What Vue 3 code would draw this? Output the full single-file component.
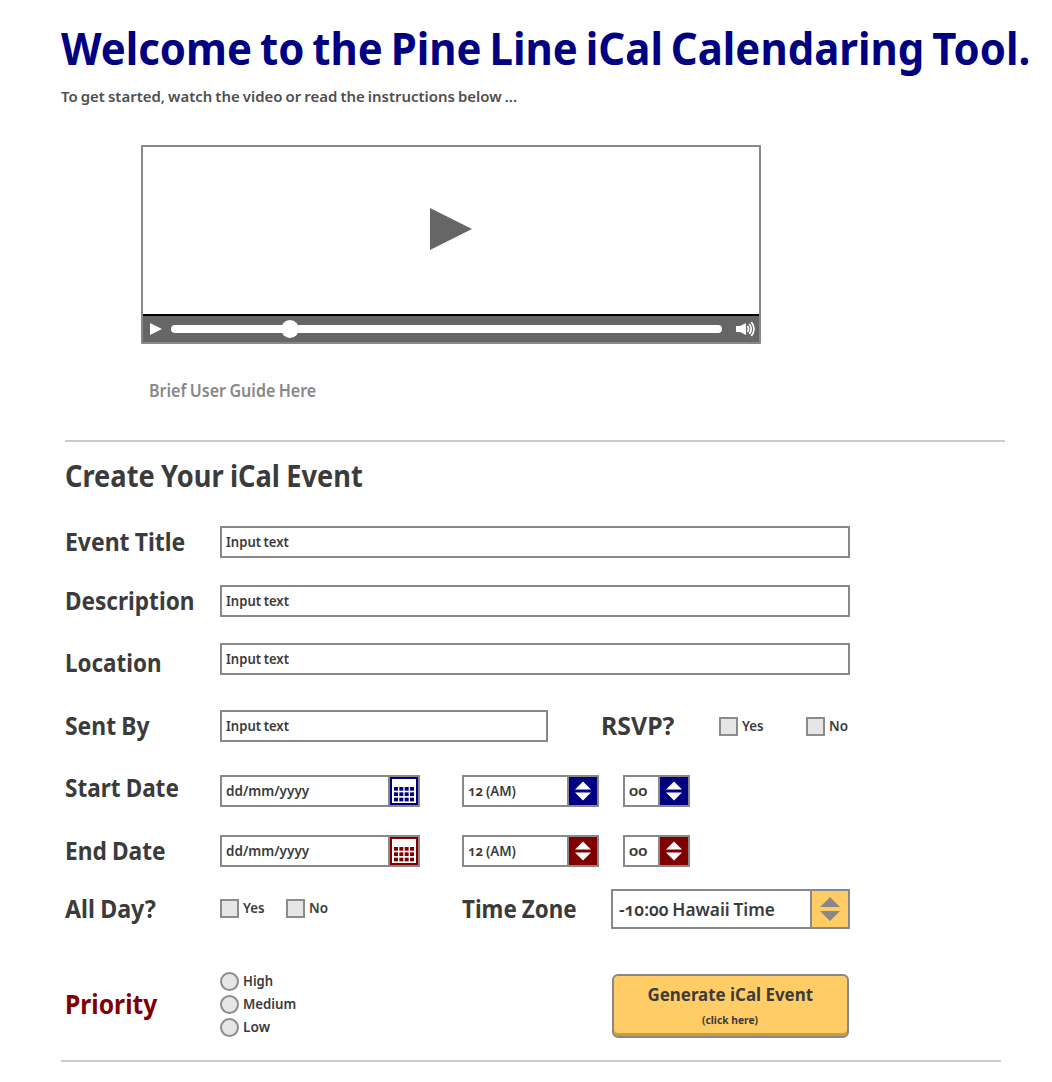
<script setup>
import { ref } from 'vue'

// Condenses a line of text so that it takes exactly the given width.
const vFit = {
  mounted(el, { value }) {
    el.style.transform = `scaleX(${value / el.offsetWidth})`
  },
}

const textRows = [
  { key: 'title', label: 'Event Title', width: 120 },
  { key: 'description', label: 'Description', width: 129 },
  { key: 'location', label: 'Location', width: 97 },
]
const dateRows = [
  { key: 'start', label: 'Start Date', width: 114 },
  { key: 'end', label: 'End Date', width: 101 },
]
const priorities = [
  { label: 'High', width: 30 },
  { label: 'Medium', width: 53 },
  { label: 'Low', width: 27.5 },
]
const dotColumns = [2, 7.33, 12.67, 18]
const dotRows = [8, 13.33, 18.67]
const progress = ref(21.6)
</script>

<template>
  <main class="page">
    <h1 class="title"><span v-fit="969" class="fit">Welcome to the Pine Line iCal Calendaring Tool.</span></h1>
    <p class="intro"><span v-fit="456" class="fit">To get started, watch the video or read the instructions below ...</span></p>

    <section class="video">
      <div class="screen">
        <svg width="42" height="42" viewBox="0 0 42 42"><path d="M0 0L42 21L0 42Z" fill="#666" /></svg>
      </div>
      <div class="controls">
        <svg class="play" width="12" height="12" viewBox="0 0 12 12"><path d="M0 0L12 6L0 12Z" fill="#fff" /></svg>
        <div class="track"><i class="knob" :style="{ left: progress + '%' }"></i></div>
        <svg class="volume" width="20" height="16" viewBox="0 0 20 16">
          <path d="M0 5H4L10 2V14L4 11H0Z" fill="#fff" />
          <path d="M11.5 5Q13.6 8 11.5 11M13.4 3Q17 8 13.4 13M15.4 1Q20.6 8 15.4 15" fill="none" stroke="#fff" stroke-width="1.7" />
        </svg>
      </div>
    </section>

    <p class="guide"><span v-fit="167" class="fit">Brief User Guide Here</span></p>
    <hr class="rule" />
    <h2 class="heading"><span v-fit="298" class="fit">Create Your iCal Event</span></h2>

    <form class="form" @submit.prevent>
      <div v-for="row in textRows" :key="row.key" class="row" :class="row.key">
        <label class="label"><span v-fit="row.width" class="fit">{{ row.label }}</span></label>
        <div class="field wide"><span v-fit="63" class="fit">Input text</span></div>
      </div>

      <div class="row sent">
        <label class="label"><span v-fit="85" class="fit">Sent By</span></label>
        <div class="field medium"><span v-fit="63" class="fit">Input text</span></div>
        <label class="label rsvp"><span v-fit="73" class="fit">RSVP?</span></label>
        <div class="choice first"><i class="box"></i><span v-fit="21.5" class="fit">Yes</span></div>
        <div class="choice"><i class="box"></i><span v-fit="19" class="fit">No</span></div>
      </div>

      <div v-for="row in dateRows" :key="row.key" class="row" :class="row.key">
        <label class="label"><span v-fit="row.width" class="fit">{{ row.label }}</span></label>
        <div class="field date">
          <span v-fit="83" class="fit">dd/mm/yyyy</span>
          <div class="addon">
            <svg width="24" height="24" viewBox="0 0 24 24">
              <rect width="24" height="24" fill="#fff" />
              <template v-for="y in dotRows" :key="y">
                <rect v-for="x in dotColumns" :key="x" :x="x" :y="y" width="4" height="3.7" fill="currentColor" />
              </template>
            </svg>
          </div>
        </div>
        <div class="field hour">
          <span v-fit="47.5" class="fit digits">12 (AM)</span>
          <div class="addon">
            <svg width="16" height="20" viewBox="0 0 16 20">
              <path d="M0 8.5L8 .5L16 8.5ZM0 11.5H16L8 19.5Z" fill="#fff" />
            </svg>
          </div>
        </div>
        <div class="field minute">
          <span v-fit="18" class="fit digits">00</span>
          <div class="addon">
            <svg width="16" height="20" viewBox="0 0 16 20">
              <path d="M0 8.5L8 .5L16 8.5ZM0 11.5H16L8 19.5Z" fill="#fff" />
            </svg>
          </div>
        </div>
      </div>

      <div class="row allday">
        <label class="label"><span v-fit="91" class="fit">All Day?</span></label>
        <div class="choice near"><i class="box"></i><span v-fit="21.5" class="fit">Yes</span></div>
        <div class="choice near"><i class="box"></i><span v-fit="19" class="fit">No</span></div>
        <label class="label zone"><span v-fit="115" class="fit">Time Zone</span></label>
        <div class="select">
          <span v-fit="156" class="fit digits">-10:00 Hawaii Time</span>
          <div class="addon">
            <svg width="20" height="24" viewBox="0 0 20 24">
              <path d="M0 10L10 0L20 10ZM0 14H20L10 24Z" fill="#888" />
            </svg>
          </div>
        </div>
      </div>

      <div class="row priority">
        <label class="label"><span v-fit="92" class="fit">Priority</span></label>
        <div class="radios">
          <div v-for="p in priorities" :key="p.label" class="choice">
            <i class="box round"></i><span v-fit="p.width" class="fit">{{ p.label }}</span>
          </div>
        </div>
        <button class="generate" type="submit">
          <span v-fit="166" class="fit">Generate iCal Event</span>
          <small v-fit="56" class="fit">(click here)</small>
        </button>
      </div>
    </form>
    <hr class="rule end-rule" />
  </main>
</template>

<style>
body {
  margin: 0;
  background: #fff;
}
</style>

<style scoped>
.page {
  box-sizing: border-box;
  width: 1052px;
  height: 1082px;
  overflow: hidden;
  display: flex;
  flex-direction: column;
  align-items: flex-start;
  color: #3b3b3b;
  font-family: "Noto Sans", "Open Sans", sans-serif;
  word-spacing: -0.05em;
}
.page * {
  box-sizing: border-box;
}
.fit {
  display: inline-block;
  white-space: nowrap;
  transform-origin: left center;
}
.digits {
  font-variant-numeric: oldstyle-nums;
}
h1,
h2,
p {
  margin: 0;
  white-space: nowrap;
}
.title {
  margin: 18px 0 0 61px;
  height: 60px;
  font-size: 45px;
  line-height: 60px;
  font-weight: 700;
  color: #000080;
  word-spacing: -0.07em;
}
.intro {
  margin: 8px 0 0 61px;
  height: 20px;
  font-size: 15px;
  line-height: 20px;
  font-weight: 600;
  color: #4f4f4f;
}
.video {
  margin: 39px 0 0 141px;
  width: 620px;
  height: 199px;
  display: flex;
  flex-direction: column;
  border: 2px solid #888;
  border-radius: 1px;
}
.screen {
  height: 167px;
  display: flex;
  justify-content: center;
  align-items: center;
  padding: 0 1px 3px 0;
}
.controls {
  height: 28px;
  display: flex;
  align-items: center;
  background: #666;
  border-top: 2px solid #000;
  padding-left: 7px;
}
.track {
  position: relative;
  width: 551px;
  height: 8px;
  margin: 0 14px 0 9px;
  background: #fff;
  border-radius: 4px;
}
.knob {
  position: absolute;
  top: -5px;
  width: 18px;
  height: 18px;
  margin-left: -9px;
  border-radius: 50%;
  background: #fff;
}
.guide {
  margin: 35px 0 0 149px;
  height: 24px;
  font-size: 17px;
  line-height: 24px;
  font-weight: 600;
  color: #888;
}
.rule {
  width: 940px;
  height: 2px;
  margin: 37px 0 0 65px;
  border: 0;
  background: #ccc;
}
.heading {
  margin: 14px 0 0 65px;
  height: 40px;
  font-size: 29.5px;
  line-height: 40px;
  font-weight: 700;
}
.form {
  display: flex;
  flex-direction: column;
  margin-left: 65px;
}
.row {
  display: flex;
  align-items: center;
  height: 32px;
  font-size: 13.5px;
  font-weight: 600;
}
.title.row {
  margin: 30px 0 0;
  font-size: 13.5px;
  line-height: normal;
  font-weight: 600;
  color: inherit;
}
.description {
  margin-top: 27px;
}
.location {
  margin-top: 26px;
}
.sent {
  margin-top: 35px;
}
.start {
  margin-top: 33px;
  color: #000080;
}
.end {
  margin-top: 28px;
  color: #800000;
}
.allday {
  margin-top: 22px;
  height: 40px;
}
.priority {
  margin-top: 43px;
  height: 68px;
}
.label {
  flex: none;
  width: 155px;
  height: 32px;
  line-height: 32px;
  font-size: 24.5px;
  font-weight: 700;
  color: #3b3b3b;
}
.location .label {
  margin-top: 7px;
}
.start .label {
  margin-top: -7px;
}
.field,
.select {
  flex: none;
  display: flex;
  align-items: center;
  justify-content: space-between;
  height: 32px;
  padding-left: 4px;
  border: 2px solid #888;
  background: #fff;
}
.field > .fit,
.select > .fit {
  width: max-content;
  color: #3b3b3b;
}
.field > .fit,
.choice > .fit {
  padding-bottom: 1px;
}
.wide {
  width: 630px;
}
.medium {
  width: 328px;
}
.date {
  width: 200px;
}
.hour {
  width: 137px;
  margin-left: 42px;
}
.minute {
  width: 67px;
  margin-left: 24px;
}
.addon {
  flex: none;
  display: flex;
  align-items: center;
  justify-content: center;
  width: 30px;
  height: 28px;
  border-left: 2px solid #888;
  background: currentColor;
}
.rsvp {
  width: 118px;
  margin-left: 53px;
}
.choice {
  display: flex;
  align-items: center;
  width: 66px;
  height: 19px;
}
.choice.first {
  width: 87px;
}
.choice.near {
  margin-top: -2px;
}
.box {
  flex: none;
  width: 19px;
  height: 19px;
  margin-right: 4px;
  border: 2px solid #8c8c8c;
  background: #e6e6e6;
}
.round {
  border-radius: 50%;
}
.zone {
  width: 149px;
  margin-left: 110px;
}
.select {
  width: 239px;
  height: 40px;
  padding-left: 6px;
  font-size: 17.5px;
}
.select .addon {
  width: 38px;
  height: 36px;
  background: #fc6;
}
.priority .label {
  font-size: 26px;
  color: #800000;
  margin-top: -5px;
}
.radios {
  display: flex;
  flex-direction: column;
  gap: 4px;
  height: 68px;
}
.generate {
  display: flex;
  flex-direction: column;
  align-items: center;
  width: 237px;
  height: 64px;
  margin: 0 0 0 326px;
  padding: 7px 0 0;
  border: 2px solid #888;
  border-radius: 6px;
  background: #fc6;
  box-shadow: inset 0 -3px 0 #cc9d33;
  font: 700 17px/24px "Noto Sans", "Open Sans", sans-serif;
  color: #3b3b3b;
}
.generate .fit {
  transform-origin: center;
}
.generate small {
  margin-top: 5px;
  font-size: 11px;
  line-height: 16px;
}
.end-rule {
  margin: 20px 0 0 61px;
}
</style>
